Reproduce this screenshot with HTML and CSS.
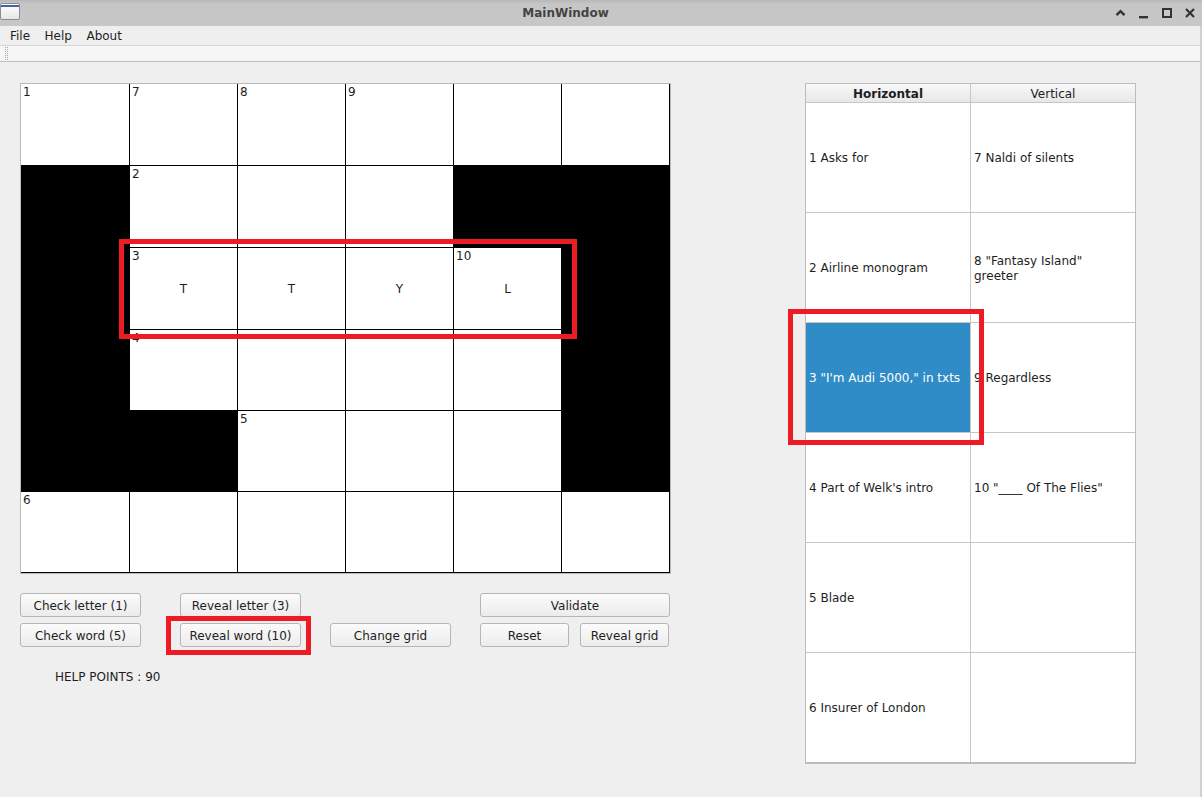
FILE: index.html
```html
<!DOCTYPE html>
<html>
<head>
<meta charset="utf-8">
<title>MainWindow</title>
<link rel="stylesheet" href="styles.css">
</head>
<body>
<div class="window">
  <div class="titlebar">
    <div class="app-icon"><div class="app-icon-band"></div></div>
    <div class="title">MainWindow</div>
    <div class="win-buttons">
      <svg class="wb" viewBox="0 0 12 12" width="12" height="12"><polyline points="1.5,8.2 5.5,4.2 9.5,8.2" fill="none" stroke="#333" stroke-width="2.4"/></svg>
      <svg class="wb" viewBox="0 0 12 12" width="12" height="12"><rect x="1" y="9" width="9" height="2.4" fill="#333"/></svg>
      <svg class="wb" viewBox="0 0 12 12" width="12" height="12"><rect x="2" y="2" width="8" height="8" fill="none" stroke="#333" stroke-width="2"/></svg>
      <svg class="wb" viewBox="0 0 12 12" width="12" height="12"><path d="M2 2 L10 10 M10 2 L2 10" stroke="#333" stroke-width="2.2"/></svg>
    </div>
  </div>
  <div class="body-area">
    <div class="menubar">
      <span class="menu-item">File</span>
      <span class="menu-item">Help</span>
      <span class="menu-item">About</span>
    </div>
    <div class="toolbar">
      <svg class="grip" width="4" height="14" viewBox="0 0 4 14">
        <defs>
          <pattern id="dots" width="2" height="2" patternUnits="userSpaceOnUse">
            <rect x="0" y="0" width="1" height="1" fill="#a8a8a8"/>
          </pattern>
        </defs>
        <rect x="0" y="0" width="4" height="14" fill="url(#dots)"/>
      </svg>
    </div>
    <div class="central">
      <div class="left-col">
        <div class="crossword">
          <div class="cell"><span class="num">1</span></div>
          <div class="cell"><span class="num">7</span></div>
          <div class="cell"><span class="num">8</span></div>
          <div class="cell"><span class="num">9</span></div>
          <div class="cell"></div>
          <div class="cell"></div>

          <div class="cell black"></div>
          <div class="cell"><span class="num">2</span></div>
          <div class="cell"></div>
          <div class="cell"></div>
          <div class="cell black"></div>
          <div class="cell black"></div>

          <div class="cell black"></div>
          <div class="cell"><span class="num">3</span><span class="letter">T</span></div>
          <div class="cell"><span class="letter">T</span></div>
          <div class="cell"><span class="letter">Y</span></div>
          <div class="cell"><span class="num">10</span><span class="letter">L</span></div>
          <div class="cell black"></div>

          <div class="cell black"></div>
          <div class="cell"><span class="num">4</span></div>
          <div class="cell"></div>
          <div class="cell"></div>
          <div class="cell"></div>
          <div class="cell black"></div>

          <div class="cell black"></div>
          <div class="cell black"></div>
          <div class="cell"><span class="num">5</span></div>
          <div class="cell"></div>
          <div class="cell"></div>
          <div class="cell black"></div>

          <div class="cell"><span class="num">6</span></div>
          <div class="cell"></div>
          <div class="cell"></div>
          <div class="cell"></div>
          <div class="cell"></div>
          <div class="cell"></div>
        </div>

        <div class="controls">
          <button class="btn c1 r1">Check letter (1)</button>
          <button class="btn c2 r1">Reveal letter (3)</button>
          <button class="btn validate r1">Validate</button>
          <button class="btn c1 r2">Check word (5)</button>
          <button class="btn c2 r2">Reveal word (10)</button>
          <button class="btn c3 r2">Change grid</button>
          <button class="btn c4 r2 narrow">Reset</button>
          <button class="btn c5 r2 narrow">Reveal grid</button>
        </div>

        <div class="points">HELP POINTS : 90</div>
      </div>

      <div class="clues">
        <div class="clue-grid">
          <div class="hdr bold">Horizontal</div>
          <div class="hdr">Vertical</div>
          <div class="clue">1 Asks for</div>
          <div class="clue">7 Naldi of silents</div>
          <div class="clue">2 Airline monogram</div>
          <div class="clue">8 "Fantasy Island" greeter</div>
          <div class="clue selected">3 "I'm Audi 5000," in txts</div>
          <div class="clue">9 Regardless</div>
          <div class="clue">4 Part of Welk's intro</div>
          <div class="clue">10 "____ Of The Flies"</div>
          <div class="clue">5 Blade</div>
          <div class="clue"></div>
          <div class="clue">6 Insurer of London</div>
          <div class="clue"></div>
        </div>
      </div>
    </div>
  </div>

  <div class="mark mark-row"></div>
  <div class="mark mark-btn"></div>
  <div class="mark mark-clue"></div>
</div>
</body>
</html>
```

FILE: styles.css
```css
* { box-sizing: border-box; }

html, body {
  margin: 0;
  padding: 0;
  width: 1202px;
  height: 797px;
  overflow: hidden;
  font-family: "DejaVu Sans", "Liberation Sans", sans-serif;
  font-size: 12px;
  color: #1e1e1e;
}

.window {
  position: relative;
  width: 1202px;
  height: 797px;
  background: #efefef;
  display: flex;
  flex-direction: column;
}

/* Title bar */
.titlebar {
  height: 26px;
  flex: none;
  display: flex;
  align-items: center;
  background: linear-gradient(#b8b8b8, #c6c6c6 4px, #c7c7c7);
}

.app-icon {
  width: 20px;
  height: 17px;
  margin-top: -3px;
  border: 1px solid #8e8e8e;
  border-radius: 2px;
  background: linear-gradient(#ffffff, #e6e6e6);
  flex: none;
}

.app-icon-band {
  height: 2px;
  margin-top: 1px;
  background: #3e66a8;
}

.title {
  flex: 1;
  text-align: center;
  font-weight: bold;
  color: #444;
  font-size: 12px;
  padding-right: 4px;
}

.win-buttons {
  display: flex;
  gap: 11px;
  padding-right: 6px;
  flex: none;
}

.wb { display: block; }

/* Menu + toolbar */
.body-area {
  flex: 1;
  display: flex;
  flex-direction: column;
  border-right: 2px solid #d0d0d0;
}

.menubar {
  height: 19px;
  display: flex;
  align-items: center;
  padding-left: 3px;
  background: #efefef;
}

.menu-item {
  padding: 0 7.5px 0 7px;
  line-height: 14px;
}

.toolbar {
  height: 17px;
  background: #f6f6f6;
  border-top: 1px solid #d6d6d6;
  border-bottom: 1px solid #bdbdbd;
  padding: 1px 0 0 5px;
}

.grip { display: block; }

/* Central area */
.central {
  flex: 1;
  display: flex;
  align-items: flex-start;
  padding: 21px 0 0 20px;
}

.left-col {
  width: 651px;
  flex: none;
}

.crossword {
  display: grid;
  grid-template-columns: 109px repeat(5, 108px);
  grid-template-rows: 82px 82px 82px 81px 81px 81px;
  border: 1px solid #b9b9b9;
  width: 651px;
  background: #fff;
}

.cell {
  display: grid;
  background: #fff;
  border-right: 1px solid #000;
  border-bottom: 1px solid #000;
}

.cell.black {
  background: #000;
}

.num,
.letter {
  grid-area: 1 / 1;
  line-height: 14px;
}

.num {
  align-self: start;
  justify-self: start;
  padding: 1px 0 0 2px;
}

.letter {
  align-self: center;
  justify-self: center;
}

/* Buttons */
.controls {
  display: grid;
  grid-template-columns: 160px 150px 150px 100px 90px;
  grid-template-rows: 24px 24px;
  row-gap: 6px;
  margin-top: 19px;
}

.btn {
  width: 121px;
  height: 24px;
  padding: 1px 0 0;
  font-family: "DejaVu Sans", "Liberation Sans", sans-serif;
  font-size: 12px;
  color: #1e1e1e;
  background: linear-gradient(#fbfbfb, #ececec);
  border: 1px solid #b6b6b6;
  border-radius: 3px;
}

.btn.narrow { width: 89px; }

.r1 { grid-row: 1; }
.r2 { grid-row: 2; }
.c1 { grid-column: 1; }
.c2 { grid-column: 2; }
.c3 { grid-column: 3; }
.c4 { grid-column: 4; }
.c5 { grid-column: 5; }

.btn.validate {
  grid-column: 4 / span 2;
  width: 190px;
}

.points {
  margin: 23px 0 0 35px;
  line-height: 14px;
}

/* Clues table */
.clues {
  margin-left: 134px;
  width: 331px;
  border: 1px solid #bcbcbc;
  border-bottom-width: 2px;
  background: #c6c6c6;
}

.clue-grid {
  display: grid;
  grid-template-columns: 164px 164px;
  grid-template-rows: 18px repeat(6, 109px);
  gap: 1px;
}

.hdr {
  display: flex;
  align-items: center;
  justify-content: center;
  background: linear-gradient(#f8f8f8, #e7e7e7);
  line-height: 14px;
  padding-top: 1px;
}

.hdr.bold { font-weight: bold; }

.clue {
  display: flex;
  align-items: center;
  padding: 2px 7px 0 3px;
  background: #fff;
  line-height: 15px;
}

.clue.selected {
  background: #308cc6;
  color: #fff;
}

/* Red annotation marks over the UI */
.mark {
  position: absolute;
  border: 5px solid #ed1c24;
  pointer-events: none;
}

.mark-row { left: 119px; top: 239px; width: 458px; height: 100px; }
.mark-btn { left: 166px; top: 616px; width: 145px; height: 39px; }
.mark-clue { left: 788px; top: 309px; width: 196px; height: 136px; }
```
